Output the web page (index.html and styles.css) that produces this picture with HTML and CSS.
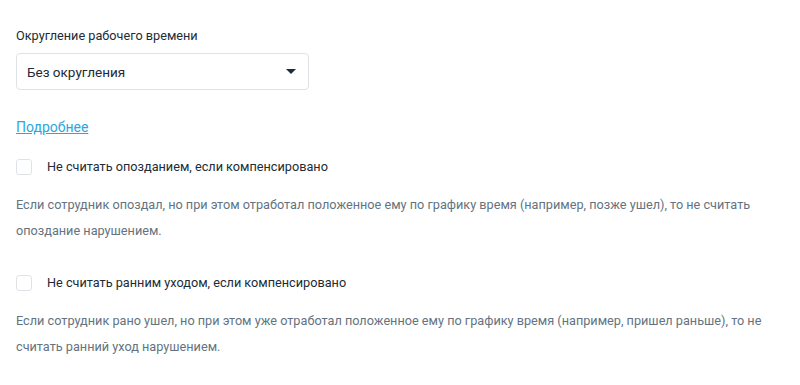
FILE: index.html
```html
<!DOCTYPE html>
<html lang="ru">
<head>
    <meta name="viewport" content="width=device-width, initial-scale=1">
    <title>Округление рабочего времени</title>
    <link rel="stylesheet" href="styles.css">
</head>
<body>
    <div class="settings">
        <div class="field">
            <label class="field-label">Округление рабочего времени</label>
            <div class="select">
                <span>Без округления</span>
                <span class="select-arrow"></span>
            </div>
        </div>

        <a class="more-link" href="#">Подробнее</a>

        <div class="option">
            <label class="checkbox-row">
                <span class="checkbox"></span>
                <span>Не считать опозданием, если компенсировано</span>
            </label>
            <p class="hint">Если сотрудник опоздал, но при этом отработал положенное ему по графику время (например, позже ушел), то не считать опоздание нарушением.</p>
        </div>

        <div class="option">
            <label class="checkbox-row">
                <span class="checkbox"></span>
                <span>Не считать ранним уходом, если компенсировано</span>
            </label>
            <p class="hint">Если сотрудник рано ушел, но при этом уже отработал положенное ему по графику время (например, пришел раньше), то не считать ранний уход нарушением.</p>
        </div>
    </div>
</body>
</html>
```

FILE: styles.css
```css
body {
    font-family: Roboto, 'Noto Sans', sans-serif;
    margin: 0;
    padding: 0;
    background-color: #ffffff;
    color: #212b36;
}

.settings {
    padding: 26px 16px 0;
    display: flex;
    flex-direction: column;
    align-items: flex-start;
}

.field-label {
    display: block;
    font-size: 12.7px;
    line-height: 20px;
}

.select {
    width: 293px;
    height: 37px;
    margin-top: 7px;
    padding: 0 12px 0 10px;
    box-sizing: border-box;
    border: 1px solid #dfe3e8;
    border-radius: 4px;
    display: flex;
    justify-content: space-between;
    align-items: center;
    font-size: 13.5px;
}

.select-arrow {
    width: 0;
    height: 0;
    border-left: 5px solid transparent;
    border-right: 5px solid transparent;
    border-top: 5px solid #212b36;
}

.more-link {
    margin-top: 27px;
    font-size: 14px;
    line-height: 20px;
    color: #2ba6de;
}

.option {
    margin-top: 20px;
}

.option + .option {
    margin-top: 29px;
}

.checkbox-row {
    display: flex;
    align-items: center;
    gap: 15px;
    font-size: 12.7px;
    line-height: 20px;
}

.checkbox {
    width: 16px;
    height: 16px;
    box-sizing: border-box;
    border: 1px solid #dfe3e8;
    border-radius: 3px;
}

.hint {
    margin: 15px 0 0;
    font-size: 12.7px;
    line-height: 26px;
    color: #637381;
}
```
